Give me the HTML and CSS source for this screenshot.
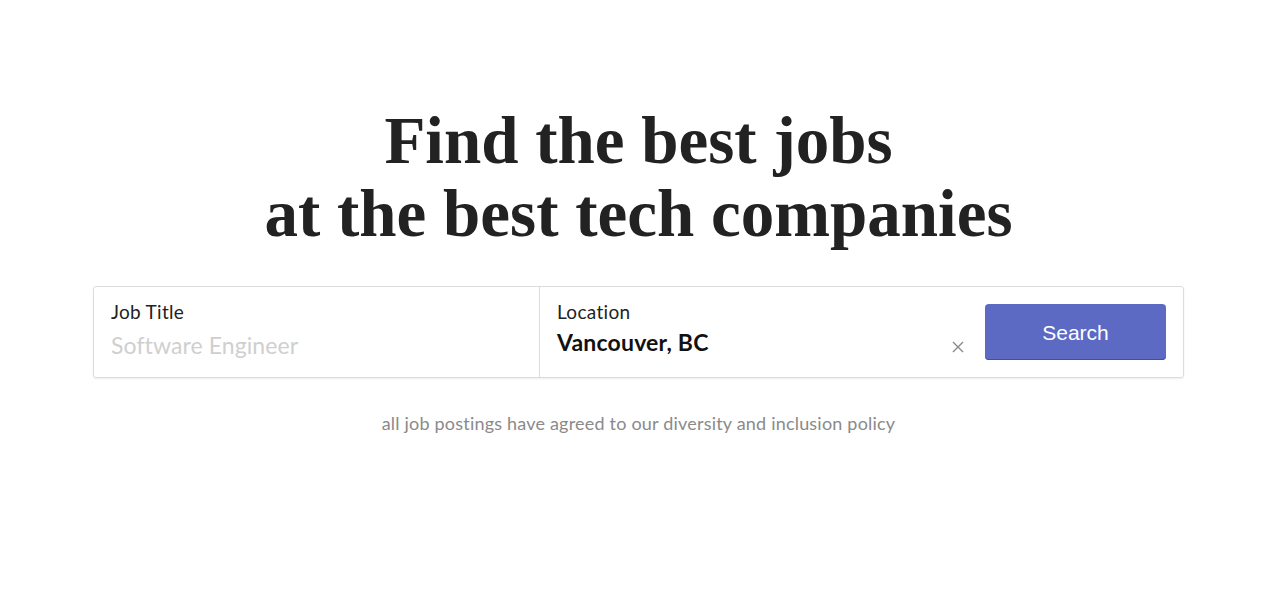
FILE: index.html
```html
<!DOCTYPE html>
<html lang="en">
<head>
<meta charset="utf-8">
<title>Find the best jobs</title>
<link rel="stylesheet" href="styles.css">
</head>
<body>
<main class="hero">
  <h1 class="headline">Find the best jobs<br>at the best tech companies</h1>
  <form class="search">
    <label class="field field-title">
      <span class="field-label">Job Title</span>
      <span class="field-value placeholder">Software Engineer</span>
    </label>
    <div class="field field-location">
      <div class="field-text">
        <span class="field-label">Location</span>
        <span class="field-value filled">Vancouver, BC</span>
      </div>
      <span class="clear" aria-label="clear">
        <svg width="12" height="12" viewBox="0 0 12 12"><path d="M1 1L11 11M11 1L1 11" stroke="#8a8a8a" stroke-width="1.4" fill="none"/></svg>
      </span>
      <button type="button" class="search-btn">Search</button>
    </div>
  </form>
  <p class="note">all job postings have agreed to our diversity and inclusion policy</p>
</main>
</body>
</html>
```
FILE: styles.css
```css
html, body {
  margin: 0;
  padding: 0;
  background: #fff;
}
.hero {
  display: flex;
  flex-direction: column;
  align-items: center;
  padding-top: 104px;
  padding-right: 6px;
}
.headline {
  margin: 0;
  font-family: "Liberation Serif", "Times New Roman", serif;
  font-weight: 700;
  font-size: 67px;
  line-height: 73px;
  color: #222;
  text-align: center;
}
.search {
  margin-top: 36px;
  width: 1091px;
  height: 92px;
  box-sizing: border-box;
  display: flex;
  border: 1px solid #dcdcdc;
  border-radius: 3px;
  box-shadow: 0 1px 2px rgba(0,0,0,0.08);
}
.field {
  display: flex;
  box-sizing: border-box;
  font-family: "Lato", "Noto Sans", sans-serif;
}
.field-title {
  width: 446px;
  flex-direction: column;
  padding: 13px 17px 0;
  border-right: 1px solid #dcdcdc;
}
.field-location {
  flex: 1;
  align-items: flex-start;
  padding: 0 17px;
}
.field-text {
  flex: 1;
  display: flex;
  flex-direction: column;
  padding-top: 13px;
}
.field-label {
  font-size: 19px;
  line-height: 24px;
  letter-spacing: 0.3px;
  color: #222;
}
.field-value {
  font-size: 23px;
  line-height: 32px;
}
.placeholder {
  color: #cfcfcf;
  margin-top: 5px;
  letter-spacing: 0.1px;
}
.filled {
  font-weight: 700;
  color: #111;
  margin-top: 2px;
  letter-spacing: 0.2px;
}
.clear {
  display: flex;
  margin: 54px 21px 0 0;
}
.search-btn {
  margin-top: 17px;
  width: 181px;
  height: 56px;
  border: none;
  border-radius: 4px;
  background: #5c6ac4;
  box-shadow: inset 0 -1px 0 #3f4eae;
  color: #fff;
  font-family: "Liberation Sans", Arial, sans-serif;
  font-size: 21px;
  padding-top: 2px;
}
.note {
  margin: 34px 0 0;
  font-family: "Lato", "Noto Sans", sans-serif;
  font-size: 18px;
  letter-spacing: 0.2px;
  color: #8a8a8a;
}
```
